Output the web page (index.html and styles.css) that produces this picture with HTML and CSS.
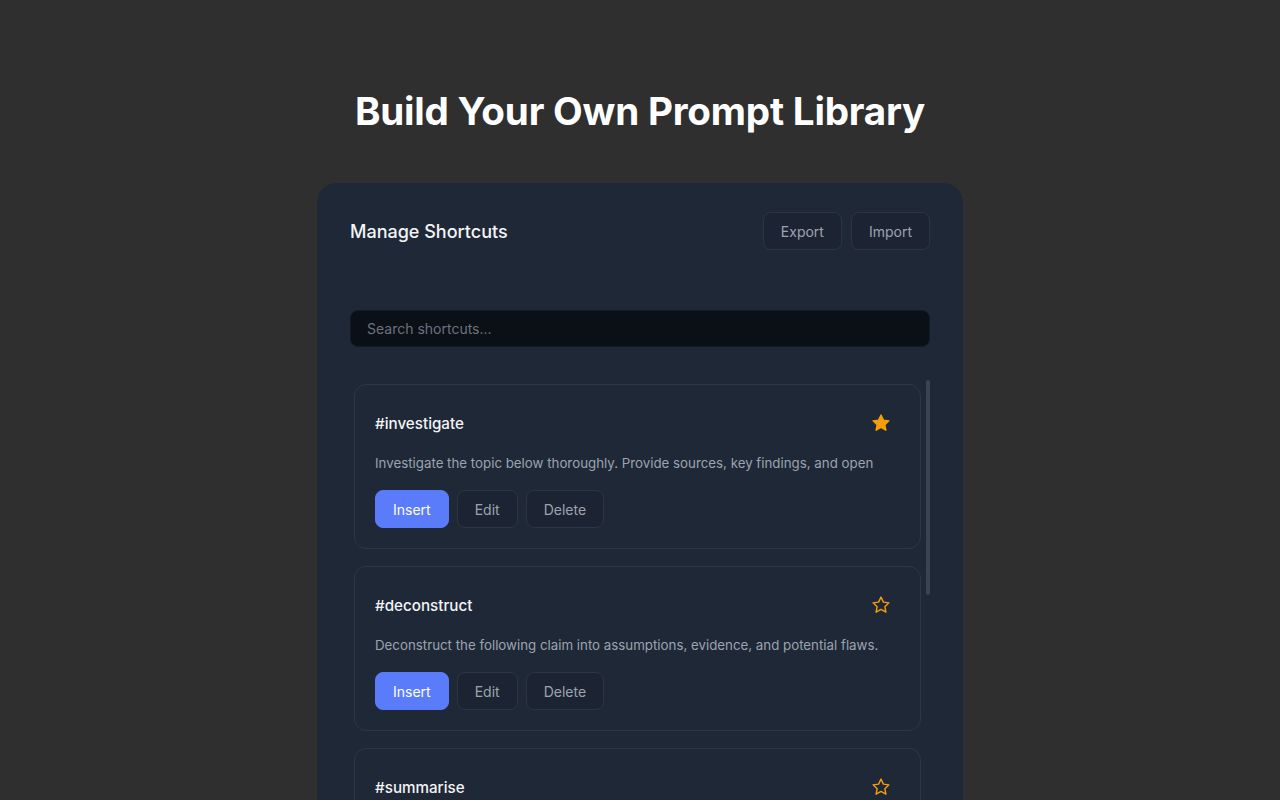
FILE: index.html
```html
<!DOCTYPE html>
<html lang="en">
<head>
  <meta charset="UTF-8">
  <meta name="viewport" content="width=device-width, initial-scale=1.0">
  <title>Build Your Own Prompt Library</title>
  <link rel="stylesheet" href="styles.css">
</head>
<body>
  <h1>Build Your Own Prompt Library</h1>

  <div class="panel">
    <div class="panel-head">
      <h2>Manage Shortcuts</h2>
      <div class="head-actions">
        <button class="btn">Export</button>
        <button class="btn">Import</button>
      </div>
    </div>

    <input class="search" type="text" placeholder="Search shortcuts...">

    <div class="list-wrap">
      <div class="list">
        <div class="card">
          <div class="card-head">
            <span class="tag">#investigate</span>
            <svg class="star" viewBox="0 0 24 24"><path class="filled" d="M12 2.5l2.9 6.1 6.6.8-4.9 4.6 1.3 6.6L12 17.3l-5.9 3.3 1.3-6.6-4.9-4.6 6.6-.8z"/></svg>
          </div>
          <p class="desc">Investigate the topic below thoroughly. Provide sources, key findings, and open questions for further research.</p>
          <div class="actions">
            <button class="btn primary">Insert</button>
            <button class="btn">Edit</button>
            <button class="btn">Delete</button>
          </div>
        </div>

        <div class="card">
          <div class="card-head">
            <span class="tag">#deconstruct</span>
            <svg class="star" viewBox="0 0 24 24"><path d="M12 2.5l2.9 6.1 6.6.8-4.9 4.6 1.3 6.6L12 17.3l-5.9 3.3 1.3-6.6-4.9-4.6 6.6-.8z"/></svg>
          </div>
          <p class="desc">Deconstruct the following claim into assumptions, evidence, and potential flaws.</p>
          <div class="actions">
            <button class="btn primary">Insert</button>
            <button class="btn">Edit</button>
            <button class="btn">Delete</button>
          </div>
        </div>

        <div class="card">
          <div class="card-head">
            <span class="tag">#summarise</span>
            <svg class="star" viewBox="0 0 24 24"><path d="M12 2.5l2.9 6.1 6.6.8-4.9 4.6 1.3 6.6L12 17.3l-5.9 3.3 1.3-6.6-4.9-4.6 6.6-.8z"/></svg>
          </div>
          <p class="desc">Summarise the text below into five concise bullet points.</p>
          <div class="actions">
            <button class="btn primary">Insert</button>
            <button class="btn">Edit</button>
            <button class="btn">Delete</button>
          </div>
        </div>
      </div>
      <div class="scrollbar"><div class="thumb"></div></div>
    </div>
  </div>
</body>
</html>
```

FILE: styles.css
```css
body {
  margin: 0;
  background: #2f2f2f;
  color: #fff;
  font-family: Inter, "Liberation Sans", sans-serif;
  height: 800px;
  overflow: hidden;
}
h1 {
  margin: 89px 0 0;
  font-size: 38.6px;
  line-height: 44px;
  font-weight: 700;
  text-align: center;
  letter-spacing: -0.2px;
}
.panel {
  width: 580px;
  margin: 50px auto 0;
  padding: 29px 33px 0;
  background: #1f2837;
  border-radius: 20px;
  height: 700px;
}
.panel-head {
  display: flex;
  justify-content: space-between;
  align-items: center;
}
.panel-head h2 {
  margin: 0;
  font-size: 18px;
  font-weight: 500;
  color: #f3f4f6;
}
.head-actions {
  display: flex;
  gap: 9px;
}
.btn {
  height: 38px;
  padding: 0 17px;
  font-family: inherit;
  font-size: 14px;
  color: #9ca3af;
  background: #1c2433;
  border: 1px solid #2c3546;
  border-radius: 8px;
}
.btn.primary {
  background: #5b7cfa;
  border-color: #5b7cfa;
  color: #fff;
}
.search {
  display: block;
  box-sizing: border-box;
  width: 100%;
  height: 37px;
  margin-top: 60px;
  padding: 0 16px;
  background: #0b0f16;
  border: 1px solid #151b26;
  border-radius: 8px;
  font-family: inherit;
  font-size: 14px;
  color: #e5e7eb;
  outline: none;
}
.search::placeholder {
  color: #6b7280;
}
.list-wrap {
  margin-top: 33px;
  display: flex;
  gap: 1px;
}
.list {
  flex: 1;
  height: 600px;
  overflow: hidden;
  padding: 4px;
  display: flex;
  flex-direction: column;
  gap: 17px;
}
.scrollbar {
  width: 4px;
}
.thumb {
  height: 215px;
  background: #3a4354;
  border-radius: 2px;
}
.card {
  flex-shrink: 0;
  padding: 20px 20px;
  border: 1px solid #2e3747;
  border-radius: 12px;
  background: #1f2837;
}
.card-head {
  height: 36px;
  display: flex;
  justify-content: space-between;
  align-items: center;
}
.tag {
  font-size: 15.2px;
  font-weight: 500;
  color: #f3f4f6;
}
.star {
  width: 20px;
  height: 20px;
  margin-right: 9px;
}
.star path {
  fill: none;
  stroke: #f59e0b;
  stroke-width: 1.7;
  stroke-linejoin: round;
}
.star path.filled {
  fill: #f59e0b;
}
.desc {
  margin: 12px 0 0;
  font-size: 13.3px;
  line-height: 20px;
  height: 20px;
  overflow: hidden;
  color: #9ca3af;
}
.actions {
  margin-top: 17px;
  display: flex;
  gap: 8px;
}
```
